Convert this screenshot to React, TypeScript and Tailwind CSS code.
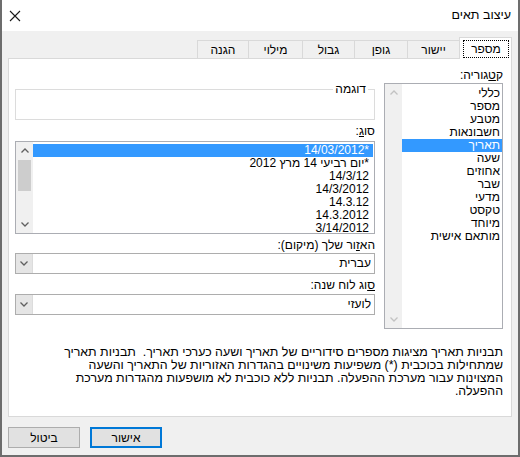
import React from "react";

function Chevron({ up, className }: { up?: boolean; className?: string }) {
  return (
    <svg width="8" height="5" viewBox="0 0 8 5" className={className}>
      <polyline
        points={up ? "0.5,4.5 4,1 7.5,4.5" : "0.5,0.5 4,4 7.5,0.5"}
        fill="none"
        stroke="currentColor"
        strokeWidth="1.3"
      />
    </svg>
  );
}

function ScrollBar({ thumb, disabled }: { thumb?: boolean; disabled?: boolean }) {
  const arrow = disabled ? "text-[#c2c2c2]" : "text-[#606060]";
  return (
    <div className="flex w-[17px] flex-col bg-[#f0f0f0]">
      <div className={`flex h-[17px] items-center justify-center ${arrow}`}>
        <Chevron up />
      </div>
      <div className="flex-1 px-[2px] pt-px">
        {thumb && <div className="h-[31px] bg-[#cdcdcd]" />}
      </div>
      <div className={`flex h-[17px] items-center justify-center ${arrow}`}>
        <Chevron />
      </div>
    </div>
  );
}

function Combo({ value }: { value: string }) {
  return (
    <div className="flex h-[21px] border border-[#adadad] bg-white">
      <div className="flex-1 pr-[3px] leading-[19px]">{value}</div>
      <div className="flex w-[17px] items-center justify-center border-r border-[#dcdcdc] bg-[#e5e5e5] text-[#606060]">
        <Chevron />
      </div>
    </div>
  );
}

export default function App() {
  const tabs = [
    { name: "מספר", w: "w-[53px]" },
    { name: "יישור", w: "w-[52px]" },
    { name: "גופן", w: "w-[53px]" },
    { name: "גבול", w: "w-[52px]" },
    { name: "מילוי", w: "w-[54px]" },
    { name: "הגנה", w: "w-[51px]" },
  ];

  const categories = [
    "כללי",
    "מספר",
    "מטבע",
    "חשבונאות",
    "תאריך",
    "שעה",
    "אחוזים",
    "שבר",
    "מדעי",
    "טקסט",
    "מיוחד",
    "מותאם אישית",
  ];

  const types = [
    "*14/03/2012",
    "*יום רביעי 14 מרץ 2012",
    "14/3/12",
    "14/3/2012",
    "14.3.12",
    "14.3.2012",
    "3/14/2012",
  ];

  const description = [
    "תבניות תאריך מציגות מספרים סידוריים של תאריך ושעה כערכי תאריך.  תבניות תאריך",
    "שמתחילות בכוכבית (*) משפיעות משינויים בהגדרות האזוריות של התאריך והשעה",
    "המצוינות עבור מערכת ההפעלה. תבניות ללא כוכבית לא מושפעות מהגדרות מערכת",
    "ההפעלה.",
  ];

  return (
    <div
      dir="rtl"
      className="flex h-[457px] w-[520px] flex-col overflow-hidden border-x-2 border-b-2 border-[#6d6d6d] bg-[#f0f0f0] font-['Liberation_Sans',Arial,sans-serif] text-[12px] text-black"
    >
      {/* title bar */}
      <div className="flex h-[31px] shrink-0 items-center justify-between bg-white pl-[7px] pr-[7px]">
        <span className="text-[12.5px]">עיצוב תאים</span>
        <svg width="12" height="12" viewBox="0 0 12 12" className="text-[#1a1a1a]">
          <path d="M1 1 L11 11 M11 1 L1 11" stroke="currentColor" strokeWidth="1.1" fill="none" />
        </svg>
      </div>

      {/* tabs */}
      <div className="mr-[6px] mt-[6px] flex h-[22px] items-end">
        {tabs.map((t, i) =>
          i === 0 ? (
            <div
              key={t.name}
              className={`relative z-10 flex h-[22px] ${t.w} border-x border-t border-[#d9d9d9] bg-white p-[2px] pb-[1px] pl-[3px]`}
            >
              <div className="flex flex-1 items-center justify-center border border-dotted border-black leading-none">
                {t.name}
              </div>
            </div>
          ) : (
            <div
              key={t.name}
              className={`mb-px flex h-[18px] ${t.w} items-center justify-center border-l border-t border-[#d9d9d9]`}
            >
              {t.name}
            </div>
          )
        )}
      </div>

      {/* panel */}
      <div className="mx-[6px] -mt-px flex h-[359px] flex-col border border-[#d9d9d9] bg-white px-[8px] pt-[9px]">
        <div className="flex gap-[9px]">
          {/* category */}
          <div className="w-[119px] shrink-0">
            <div className="leading-[15px]">
              ק<span className="underline">ט</span>גוריה:
            </div>
            <div className="flex h-[246px] border border-[#abadb3]">
              <div className="flex-1 pt-[3px]">
                {categories.map((c, i) => (
                  <div
                    key={c}
                    className={`h-[13px] pr-[2px] leading-[13px] ${
                      i === 4 ? "bg-[#3399ff] text-white" : ""
                    }`}
                  >
                    {c}
                  </div>
                ))}
              </div>
              <ScrollBar disabled />
            </div>
          </div>

          {/* left column */}
          <div className="w-[360px] shrink-0">
            <div className="relative mt-[21px] h-[31px] border border-[#dcdcdc]">
              <span className="absolute right-[6px] top-[-8px] bg-white px-[2px] leading-[14px]">
                דוגמה
              </span>
            </div>

            <div className="mt-[4px] leading-[15px]">
              סו<span className="underline">ג</span>:
            </div>
            <div className="mt-[2px] flex h-[93px] overflow-hidden border border-[#abadb3]">
              <div className="flex-1 pt-[2px]">
                {types.map((t, i) => (
                  <div
                    key={t}
                    className={`mr-px h-[13px] pr-[4px] leading-[13px] ${
                      i === 0 ? "bg-[#3399ff] text-white" : ""
                    }`}
                  >
                    {t}
                  </div>
                ))}
              </div>
              <ScrollBar thumb />
            </div>

            <div className="mt-[4px] leading-[15px]">
              הא<span className="underline">ז</span>ור שלך (מיקום):
            </div>
            <Combo value="עברית" />

            <div className="mt-[4px] leading-[15px]">
              <span className="underline">ס</span>וג לוח שנה:
            </div>
            <div className="mt-px">
              <Combo value="לועזי" />
            </div>
          </div>
        </div>

        <div className="mt-[17px] text-[12.4px] leading-[13px]">
          {description.map((line) => (
            <div key={line} className="whitespace-pre">
              {line}
            </div>
          ))}
        </div>
      </div>

      {/* buttons */}
      <div className="mt-[10px] flex justify-end gap-[10px] pl-[6px]">
        <button className="h-[21px] w-[72px] border-2 border-[#0078d7] bg-[#e1e1e1] leading-none">
          אישור
        </button>
        <button className="h-[21px] w-[72px] border border-[#adadad] bg-[#e1e1e1] leading-none">
          ביטול
        </button>
      </div>
    </div>
  );
}
